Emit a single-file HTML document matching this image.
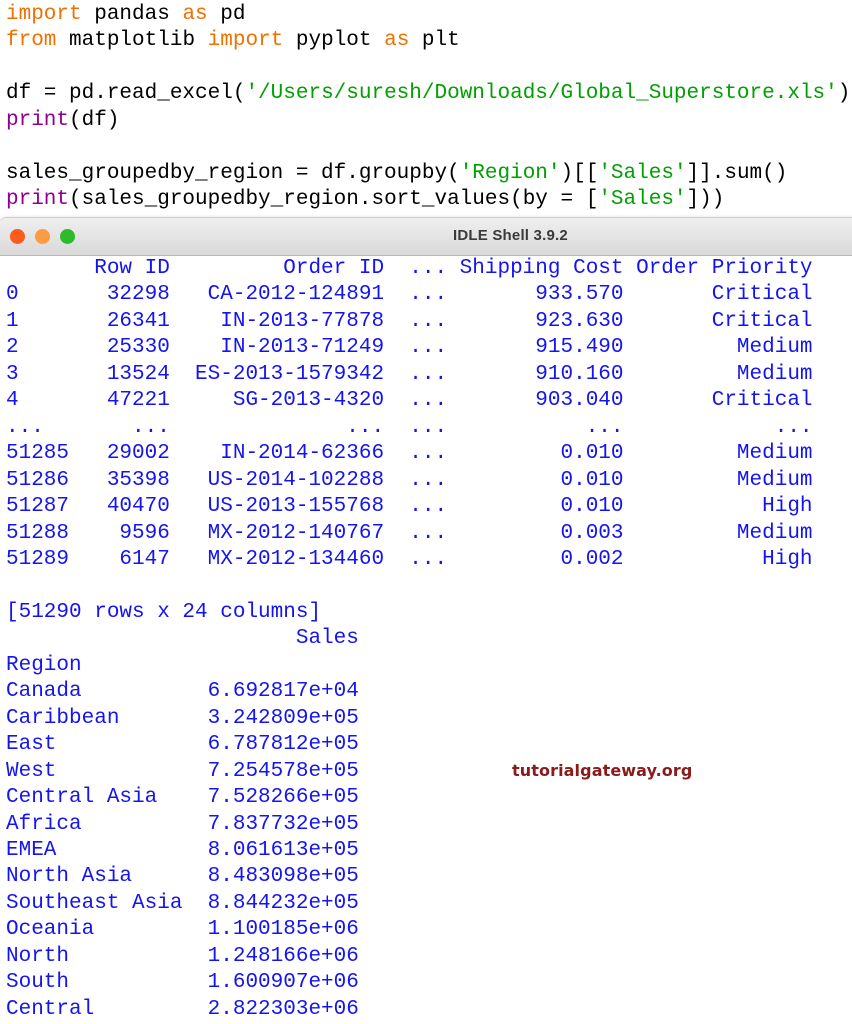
<!DOCTYPE html>
<html><head><meta charset="utf-8"><style>
html,body{margin:0;padding:0;background:#fff;width:852px;height:1024px;overflow:hidden;position:relative}
pre{margin:0;position:absolute;left:6px;font-family:"Liberation Mono",monospace;font-size:21px;line-height:26.45px;white-space:pre}
#code{top:2px;color:#000}
.k{color:#f07000}.s{color:#00a000}.p{color:#900090}
#out{top:256px;color:#1414f0}
#bar{position:absolute;left:-2px;top:217px;width:900px;height:37px;border-radius:9px 9px 0 0;background:linear-gradient(#efefef,#d9d9d9);border-top:1px solid #cfcfcf;border-bottom:1px solid #b8b8b8;box-shadow:0 -1px 2px rgba(0,0,0,.08)}
.dot{position:absolute;top:11px;width:15px;height:15px;border-radius:50%}
#title{position:absolute;left:455px;top:9px;font-family:"Liberation Sans",sans-serif;font-size:15px;font-weight:bold;color:#3a3a3a;letter-spacing:.2px}
#wm{position:absolute;left:512px;top:761px;font-family:"DejaVu Sans","Liberation Sans",sans-serif;font-weight:bold;font-size:16px;color:#8b1a1a;letter-spacing:.1px}
</style></head><body>
<pre id="code"><span class="k">import</span> pandas <span class="k">as</span> pd
<span class="k">from</span> matplotlib <span class="k">import</span> pyplot <span class="k">as</span> plt

df = pd.read_excel(<span class="s">'/Users/suresh/Downloads/Global_Superstore.xls'</span>)
<span class="p">print</span>(df)

sales_groupedby_region = df.groupby(<span class="s">'Region'</span>)[[<span class="s">'Sales'</span>]].sum()
<span class="p">print</span>(sales_groupedby_region.sort_values(by = [<span class="s">'Sales'</span>]))</pre>
<div id="bar">
<div class="dot" style="left:12px;background:#fc5a1e"></div>
<div class="dot" style="left:37px;background:#fd9b45"></div>
<div class="dot" style="left:62px;background:#2cbc2a"></div>
<div id="title">IDLE Shell 3.9.2</div>
</div>
<pre id="out">       Row ID         Order ID  ... Shipping Cost Order Priority
0       32298   CA-2012-124891  ...       933.570       Critical
1       26341    IN-2013-77878  ...       923.630       Critical
2       25330    IN-2013-71249  ...       915.490         Medium
3       13524  ES-2013-1579342  ...       910.160         Medium
4       47221     SG-2013-4320  ...       903.040       Critical
...       ...              ...  ...           ...            ...
51285   29002    IN-2014-62366  ...         0.010         Medium
51286   35398   US-2014-102288  ...         0.010         Medium
51287   40470   US-2013-155768  ...         0.010           High
51288    9596   MX-2012-140767  ...         0.003         Medium
51289    6147   MX-2012-134460  ...         0.002           High

[51290 rows x 24 columns]
                       Sales
Region
Canada          6.692817e+04
Caribbean       3.242809e+05
East            6.787812e+05
West            7.254578e+05
Central Asia    7.528266e+05
Africa          7.837732e+05
EMEA            8.061613e+05
North Asia      8.483098e+05
Southeast Asia  8.844232e+05
Oceania         1.100185e+06
North           1.248166e+06
South           1.600907e+06
Central         2.822303e+06</pre>
<div id="wm">tutorialgateway.org</div>
</body></html>
